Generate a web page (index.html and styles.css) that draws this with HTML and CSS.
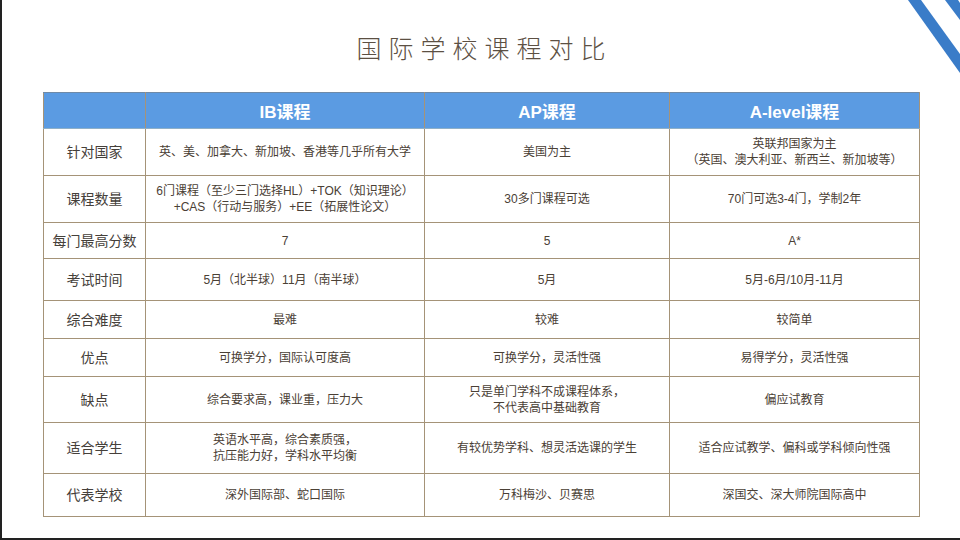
FILE: index.html
```html
<!DOCTYPE html>
<html lang="zh-CN">
<head>
<meta charset="utf-8">
<title>国际学校课程对比</title>
<link rel="stylesheet" href="styles.css">
</head>
<body>
<div class="page">
  <svg class="corner" width="60" height="80" viewBox="900 0 60 80" aria-hidden="true">
    <polygon points="908,0 921,0 960,54 960,73" fill="#3a7cc8"/>
    <polygon points="945,0 958,0 960,3 960,20" fill="#3a7cc8"/>
  </svg>
  <h1 class="title">国际学校课程对比</h1>
  <table class="cmp">
    <colgroup>
      <col class="c-label">
      <col class="c-ib">
      <col class="c-ap">
      <col class="c-al">
    </colgroup>
    <thead>
      <tr class="r-head">
        <th></th>
        <th class="dark">IB课程</th>
        <th class="blue">AP课程</th>
        <th class="blue">A-level课程</th>
      </tr>
    </thead>
    <tbody>
      <tr class="r1">
        <td class="label">针对国家</td>
        <td class="dark">英、美、加拿大、新加坡、香港等几乎所有大学</td>
        <td class="blue">美国为主</td>
        <td>英联邦国家为主<br>（英国、澳大利亚、新西兰、新加坡等）</td>
      </tr>
      <tr class="r2">
        <td class="label">课程数量</td>
        <td class="dark">6门课程（至少三门选择HL）+TOK（知识理论）<br>+CAS（行动与服务）+EE（拓展性论文）</td>
        <td class="blue">30多门课程可选</td>
        <td>70门可选3-4门，学制2年</td>
      </tr>
      <tr class="r3">
        <td class="label">每门最高分数</td>
        <td class="dark">7</td>
        <td class="blue">5</td>
        <td>A*</td>
      </tr>
      <tr class="r4">
        <td class="label">考试时间</td>
        <td class="dark">5月（北半球）11月（南半球）</td>
        <td class="blue">5月</td>
        <td>5月-6月/10月-11月</td>
      </tr>
      <tr class="r5">
        <td class="label">综合难度</td>
        <td class="dark">最难</td>
        <td class="blue">较难</td>
        <td>较简单</td>
      </tr>
      <tr class="r6">
        <td class="label">优点</td>
        <td class="dark">可换学分，国际认可度高</td>
        <td class="blue">可换学分，灵活性强</td>
        <td>易得学分，灵活性强</td>
      </tr>
      <tr class="r7">
        <td class="label">缺点</td>
        <td class="dark">综合要求高，课业重，压力大</td>
        <td class="blue">只是单门学科不成课程体系，<br>不代表高中基础教育</td>
        <td>偏应试教育</td>
      </tr>
      <tr class="r8">
        <td class="label">适合学生</td>
        <td class="dark">英语水平高，综合素质强，<br>抗压能力好，学科水平均衡</td>
        <td class="blue">有较优势学科、想灵活选课的学生</td>
        <td>适合应试教学、偏科或学科倾向性强</td>
      </tr>
      <tr class="r9">
        <td class="label">代表学校</td>
        <td class="dark">深外国际部、蛇口国际</td>
        <td class="blue">万科梅沙、贝赛思</td>
        <td>深国交、深大师院国际高中</td>
      </tr>
    </tbody>
  </table>
</div>
</body>
</html>
```
FILE: styles.css
```css
html, body {
  margin: 0;
  padding: 0;
  background: #ffffff;
}

.page {
  position: relative;
  box-sizing: border-box;
  width: 960px;
  height: 540px;
  overflow: hidden;
  border-left: 2px solid #222222;
  border-bottom: 2px solid #222222;
  padding-left: 41px;
  display: flex;
  flex-direction: column;
  align-items: flex-start;
  font-family: "Liberation Sans", "Noto Sans CJK SC", sans-serif;
}

.corner {
  position: absolute;
  top: 0;
  right: 0;
}

.title {
  margin: 0;
  width: 876px;
  height: 92px;
  box-sizing: border-box;
  padding-top: 32px;
  text-align: center;
  font-family: "Noto Sans CJK SC", sans-serif;
  font-size: 25px;
  line-height: 30px;
  font-weight: 300;
  letter-spacing: 7px;
  text-indent: 7px;
  color: #5c5043;
}

.cmp {
  border-collapse: collapse;
  table-layout: fixed;
  width: 876px;
  border: 1px solid #9c8a70;
}

.c-label { width: 102px; }
.c-ib { width: 279px; }
.c-ap { width: 245px; }
.c-al { width: 250px; }

.cmp th,
.cmp td {
  padding: 0;
  text-align: center;
  vertical-align: middle;
  border: 1px solid #a59378;
}

.cmp td {
  font-size: 12px;
  line-height: 16px;
  color: #4a4035;
}

.cmp th {
  background: #5b9be2;
  color: #ffffff;
  font-size: 17px;
  font-weight: 700;
  border-top-color: #6e8aa8;
  border-bottom: 1px solid #8fb0c8;
}

.cmp .dark {
  border-left: 1px solid #2f2f33;
}

.cmp .blue {
  border-left: 1px solid #4d5c72;
}

.cmp th.dark {
  border-left-color: #1e3350;
}

.cmp td.label {
  font-size: 14px;
  line-height: 18px;
  color: #45403a;
}

.r-head { height: 36px; }
.r1 { height: 47px; }
.r2 { height: 47px; }
.r3 { height: 36px; }
.r4 { height: 42px; }
.r5 { height: 38px; }
.r6 { height: 38px; }
.r7 { height: 46px; }
.r8 { height: 51px; }
.r9 { height: 43px; }
```
